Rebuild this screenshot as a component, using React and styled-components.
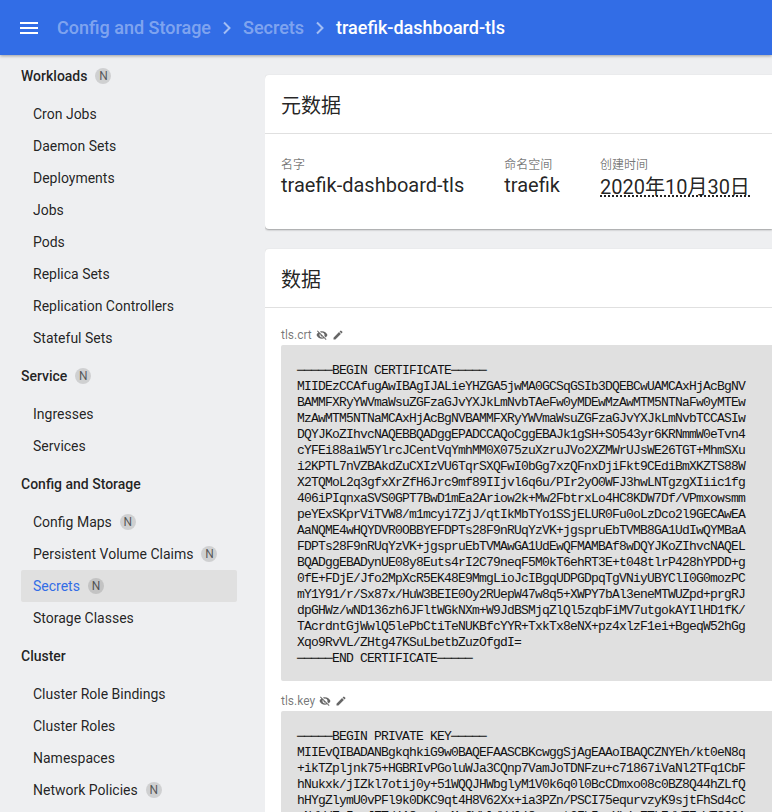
import React from "react";
import styled, { createGlobalStyle } from "styled-components";

const Global = createGlobalStyle`
  html, body {
    margin: 0;
    height: 812px;
    overflow: hidden;
    background: #eeeff1;
    font-family: Roboto, "Noto Sans CJK SC", sans-serif;
    color: rgba(0, 0, 0, 0.87);
  }
  * { box-sizing: border-box; }
`;

const Page = styled.div`
  display: flex;
  flex-direction: column;
  height: 812px;
  overflow: hidden;
`;

const Toolbar = styled.header`
  display: flex;
  align-items: center;
  flex: none;
  height: 55px;
  padding-left: 20px;
  background: #326de6;
  box-shadow: 0 1px 3px rgba(0, 0, 0, 0.35);
  position: relative;
  z-index: 2;
`;

const MenuButton = styled.svg`
  width: 18px;
  height: 12px;
  margin-right: 19px;
  flex: none;
`;

const Crumb = styled.span`
  font-size: 18px;
  font-weight: 500;
  white-space: nowrap;
  color: ${(p) => (p.$current ? "#fff" : "rgba(255, 255, 255, 0.4)")};
`;

const CrumbArrow = styled.svg`
  width: 10px;
  height: 14px;
  margin: 0 11px 0 11px;
  flex: none;
`;

const Body = styled.div`
  display: flex;
  flex: 1;
  min-height: 0;
`;

const Sidebar = styled.nav`
  flex: none;
  width: 265px;
  padding: 5px 0 0 21px;
  overflow: hidden;
`;

const Section = styled.div`
  margin-bottom: 6px;
`;

const SectionTitle = styled.div`
  display: flex;
  align-items: center;
  height: 32px;
  margin-bottom: 6px;
  font-size: 14px;
  font-weight: 500;
`;

const NavItem = styled.div`
  display: flex;
  align-items: center;
  width: 216px;
  height: 32px;
  padding-left: 12px;
  font-size: 14px;
  border-radius: 2px;
  background: ${(p) => (p.$active ? "#e0e0e0" : "transparent")};
  color: ${(p) => (p.$active ? "#326de6" : "rgba(0, 0, 0, 0.87)")};
`;

const Badge = styled.span`
  display: inline-flex;
  align-items: center;
  justify-content: center;
  width: 16px;
  height: 16px;
  margin-left: 8px;
  border-radius: 50%;
  background: rgba(0, 0, 0, 0.13);
  color: rgba(0, 0, 0, 0.6);
  font-size: 12px;
  font-weight: 400;
`;

const Main = styled.main`
  flex: 1;
  min-width: 0;
  padding-top: 20px;
  overflow: hidden;
`;

const Card = styled.section`
  background: #fff;
  border-radius: 4px 0 0 4px;
  margin-bottom: 20px;
  box-shadow: 0 1px 2px rgba(0, 0, 0, 0.35);
`;

const CardTitle = styled.h2`
  margin: 0;
  height: 59px;
  padding-left: 16px;
  display: flex;
  align-items: center;
  font-size: 20px;
  font-weight: 400;
  border-bottom: 1px solid #e0e0e0;
`;

const MetaRow = styled.div`
  display: flex;
  padding: 24px 16px 0;
  height: 95px;
`;

const MetaField = styled.div`
  margin-right: 40px;
  display: flex;
  flex-direction: column;
`;

const MetaLabel = styled.div`
  font-size: 12px;
  line-height: 14px;
  color: rgba(0, 0, 0, 0.54);
`;

const MetaValue = styled.div`
  font-size: 20px;
  line-height: 26px;
  white-space: nowrap;
`;

const DateValue = styled.span`
  display: block;
  padding-top: 8px;
  line-height: 15px;
  border-bottom: 2px dotted #222;
`;

const DataBody = styled.div`
  padding: 18px 16px 0;
`;

const DataLabel = styled.div`
  display: flex;
  align-items: center;
  height: 18px;
  margin-bottom: 1px;
  font-size: 12px;
  color: rgba(0, 0, 0, 0.54);
`;

const LabelIcon = styled.svg`
  width: 12px;
  height: 12px;
  margin-left: 4px;
  fill: rgba(0, 0, 0, 0.6);
`;

const DataBlock = styled.pre`
  margin: 0 0 11px;
  padding: 18px 16px 14px;
  width: 520px;
  background: #e0e0e0;
  border-radius: 2px;
  font-family: "Liberation Mono", monospace;
  font-size: 13px;
  letter-spacing: -0.8px;
  line-height: 16px;
  color: #111;
`;

const eye =
  "M12 7c2.76 0 5 2.24 5 5 0 .65-.13 1.26-.36 1.83l2.92 2.92c1.51-1.26 2.7-2.89 3.43-4.75-1.73-4.39-6-7.5-11-7.5-1.4 0-2.74.25-3.98.7l2.16 2.16C10.74 7.13 11.35 7 12 7zM2 4.27l2.28 2.28.46.46C3.08 8.3 1.78 10.02 1 12c1.73 4.39 6 7.5 11 7.5 1.55 0 3.03-.3 4.38-.84l.42.42L19.73 22 21 20.73 3.27 3 2 4.27zM7.53 9.8l1.55 1.55c-.05.21-.08.43-.08.65 0 1.66 1.34 3 3 3 .22 0 .44-.03.65-.08l1.55 1.55c-.67.33-1.41.53-2.2.53-2.76 0-5-2.24-5-5 0-.79.2-1.53.53-2.2z";
const pencil =
  "M3 17.25V21h3.75L17.81 9.94l-3.75-3.75L3 17.25zM20.71 7.04a1 1 0 0 0 0-1.41l-2.34-2.34a1 1 0 0 0-1.41 0l-1.83 1.83 3.75 3.75 1.83-1.83z";

const navSections = [
  {
    title: "Workloads",
    badge: true,
    items: [
      ["Cron Jobs"],
      ["Daemon Sets"],
      ["Deployments"],
      ["Jobs"],
      ["Pods"],
      ["Replica Sets"],
      ["Replication Controllers"],
      ["Stateful Sets"],
    ],
  },
  { title: "Service", badge: true, items: [["Ingresses"], ["Services"]] },
  {
    title: "Config and Storage",
    items: [
      ["Config Maps", true],
      ["Persistent Volume Claims", true],
      ["Secrets", true, true],
      ["Storage Classes"],
    ],
  },
  {
    title: "Cluster",
    items: [
      ["Cluster Role Bindings"],
      ["Cluster Roles"],
      ["Namespaces"],
      ["Network Policies", true],
    ],
  },
];

// the dashes join into one line in the reference, hence the box-drawing glyph
const cert = `─────BEGIN CERTIFICATE─────
MIIDEzCCAfugAwIBAgIJALieYHZGA5jwMA0GCSqGSIb3DQEBCwUAMCAxHjAcBgNV
BAMMFXRyYWVmaWsuZGFzaGJvYXJkLmNvbTAeFw0yMDEwMzAwMTM5NTNaFw0yMTEw
MzAwMTM5NTNaMCAxHjAcBgNVBAMMFXRyYWVmaWsuZGFzaGJvYXJkLmNvbTCCASIw
DQYJKoZIhvcNAQEBBQADggEPADCCAQoCggEBAJk1gSH+SO543yr6KRNmmW0eTvn4
cYFEi88aiW5YlrcJCentVqYmhMM0X075zuXzruJVo2XZMWrUJsWE26TGT+MhmSXu
i2KPTL7nVZBAkdZuCXIzVU6TqrSXQFwI0bGg7xzQFnxDjiFkt9CEdiBmXKZTS88W
X2TQMoL2q3gfxXrZfH6Jrc9mf89IIjvl6q6u/PIr2yO0WFJ3hwLNTgzgXIiic1fg
406iPIqnxaSVS0GPT7BwD1mEa2Ariow2k+Mw2FbtrxLo4HC8KDW7Df/VPmxowsmm
peYExSKprViTVW8/m1mcyi7ZjJ/qtIkMbTYo1SSjELUR0Fu0oLzDco2l9GECAwEA
AaNQME4wHQYDVR0OBBYEFDPTs28F9nRUqYzVK+jgspruEbTVMB8GA1UdIwQYMBaA
FDPTs28F9nRUqYzVK+jgspruEbTVMAwGA1UdEwQFMAMBAf8wDQYJKoZIhvcNAQEL
BQADggEBADynUE08y8Euts4rI2C79neqF5M0kT6ehRT3E+t048tlrP428hYPDD+g
0fE+FDjE/Jfo2MpXcR5EK48E9MmgLioJcIBgqUDPGDpqTgVNiyUBYClI0G0mozPC
mY1Y91/r/Sx87x/HuW3BEIE0Oy2RUepW47w8q5+XWPY7bAl3eneMTWUZpd+prgRJ
dpGHWz/wND136zh6JFltWGkNXm+W9JdBSMjqZlQl5zqbFiMV7utgokAYIlHD1fK/
TAcrdntGjWwlQ5lePbCtiTeNUKBfcYYR+TxkTx8eNX+pz4xlzF1ei+BgeqW52hGg
Xqo9RvVL/ZHtg47KSuLbetbZuzOfgdI=
─────END CERTIFICATE─────`;

// only the tops of the last line show at the window's edge
const key = `─────BEGIN PRIVATE KEY─────
MIIEvQIBADANBgkqhkiG9w0BAQEFAASCBKcwggSjAgEAAoIBAQCZNYEh/kt0eN8q
+ikTZpljnk75+HGBRIvPGoluWJa3CQnp7VamJoTDNFzu+c71867iVaNl2TFq1CbF
hNukxk/jIZkl7otij0y+51WQQJHWbglyM1V0k6q0l0BcCDmxo08c0BZ8Q44hZLfQ
hHYgZlymU0vPFl9k0DKC9qt4H8V62Xx+ia3PZn/PSCI75equrvzyK9sjtFhSd4cC
qN/W/Zo5mzJZT/jA8vxdzrMvGWkldVdlj8yqxrt2Fb5moXbjcZTL7dWZ7zWZ8C0A`;

function Arrow() {
  return (
    <CrumbArrow viewBox="0 0 10 14">
      <path d="M2 1.5 7.5 7 2 12.5" fill="none" stroke="rgba(255,255,255,0.55)" strokeWidth="2" />
    </CrumbArrow>
  );
}

function DataEntry({ name, value }) {
  return (
    <>
      <DataLabel>
        {name}
        <LabelIcon viewBox="0 0 24 24"><path d={eye} /></LabelIcon>
        <LabelIcon viewBox="0 0 24 24"><path d={pencil} /></LabelIcon>
      </DataLabel>
      <DataBlock>{value}</DataBlock>
    </>
  );
}

export default function App() {
  return (
    <Page>
      <Global />
      <Toolbar>
        <MenuButton viewBox="0 0 18 12">
          <path d="M0 1h18M0 6h18M0 11h18" stroke="#fff" strokeWidth="2" />
        </MenuButton>
        <Crumb>Config and Storage</Crumb>
        <Arrow />
        <Crumb>Secrets</Crumb>
        <Arrow />
        <Crumb $current>traefik-dashboard-tls</Crumb>
      </Toolbar>
      <Body>
        <Sidebar>
          {navSections.map((section) => (
            <Section key={section.title}>
              <SectionTitle>
                {section.title}
                {section.badge && <Badge>N</Badge>}
              </SectionTitle>
              {section.items.map(([label, badge, active]) => (
                <NavItem key={label} $active={active}>
                  {label}
                  {badge && <Badge>N</Badge>}
                </NavItem>
              ))}
            </Section>
          ))}
        </Sidebar>
        <Main>
          <Card>
            <CardTitle>元数据</CardTitle>
            <MetaRow>
              <MetaField>
                <MetaLabel>名字</MetaLabel>
                <MetaValue>traefik-dashboard-tls</MetaValue>
              </MetaField>
              <MetaField>
                <MetaLabel>命名空间</MetaLabel>
                <MetaValue>traefik</MetaValue>
              </MetaField>
              <MetaField>
                <MetaLabel>创建时间</MetaLabel>
                <MetaValue><DateValue>2020年10月30日</DateValue></MetaValue>
              </MetaField>
            </MetaRow>
          </Card>
          <Card>
            <CardTitle>数据</CardTitle>
            <DataBody>
              <DataEntry name="tls.crt" value={cert} />
              <DataEntry name="tls.key" value={key} />
            </DataBody>
          </Card>
        </Main>
      </Body>
    </Page>
  );
}
